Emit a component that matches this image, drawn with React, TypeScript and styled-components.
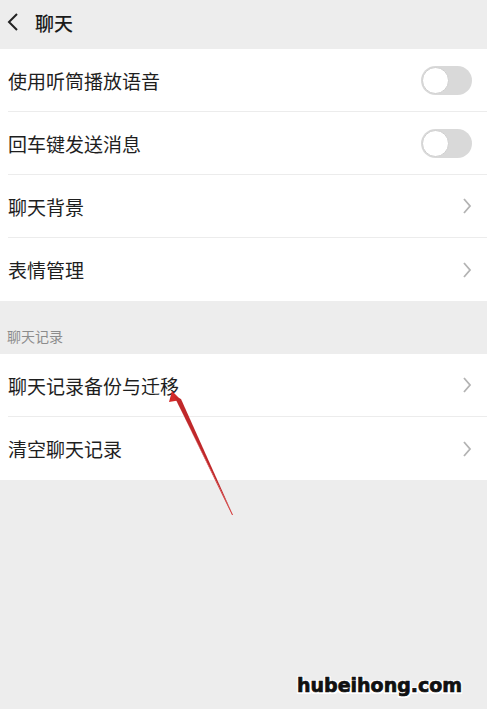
import React from "react";
import styled, { createGlobalStyle } from "styled-components";

const GlobalStyle = createGlobalStyle`
  html, body {
    margin: 0;
    padding: 0;
    background: #ededed;
  }
  body {
    font-family: "Noto Sans CJK SC", "Noto Sans", sans-serif;
  }
`;

const Page = styled.div`
  position: relative;
  width: 487px;
  height: 709px;
  background: #ededed;
  overflow: hidden;
`;

const Header = styled.div`
  height: 49px;
  display: flex;
  align-items: center;
  padding: 0 0 5px 6px;
  box-sizing: border-box;
  gap: 15px;
  color: #1a1a1a;
  font-size: 19px;
  font-weight: 500;
`;

const Group = styled.div`
  background: #fff;
  padding-left: 8px;
`;

const Row = styled.div<{ $last?: boolean }>`
  height: 63px;
  display: flex;
  align-items: center;
  justify-content: space-between;
  padding-right: 15px;
  box-sizing: border-box;
  border-bottom: ${(p) => (p.$last ? "none" : "1px solid #ececec")};
  font-size: 19px;
  color: #1e1e1e;
`;

const SectionLabel = styled.div`
  height: 53px;
  display: flex;
  align-items: flex-end;
  padding: 0 0 8px 7px;
  box-sizing: border-box;
  font-size: 14px;
  color: #8c8c8c;
`;

const Toggle = styled.div`
  width: 51px;
  height: 29px;
  border-radius: 15px;
  background: #d9d9d9;
  position: relative;
  &::after {
    content: "";
    position: absolute;
    left: 1px;
    top: 1px;
    width: 27px;
    height: 27px;
    box-sizing: border-box;
    border-radius: 50%;
    background: #fff;
    border: 1px solid #cfcfcf;
  }
`;

const Watermark = styled.div`
  position: absolute;
  left: 297px;
  top: 674px;
  font-family: "DejaVu Sans", sans-serif;
  font-weight: 900;
  font-size: 19px;
  letter-spacing: 0;
  color: #111;
  -webkit-text-stroke: 0.7px #111;
  text-shadow: 0 0 2px #fff, 1.5px 1.5px 0 #fff, -1.5px -1.5px 0 #fff, 1.5px -1.5px 0 #fff, -1.5px 1.5px 0 #fff;
`;

const Arrow = styled.svg`
  position: absolute;
  left: 0;
  top: 0;
  pointer-events: none;
`;

const Chevron = () => (
  <svg width="10" height="18" viewBox="0 0 10 18">
    <path d="M2 2 L8 9 L2 16" fill="none" stroke="#b3b3b3" strokeWidth="1.8" />
  </svg>
);

const Back = () => (
  <svg width="14" height="20" viewBox="0 0 14 20">
    <path d="M11 2 L3 10 L11 18" fill="none" stroke="#222" strokeWidth="2" />
  </svg>
);

export default function App() {
  return (
    <Page>
      <GlobalStyle />
      <Header>
        <Back />
        <span>聊天</span>
      </Header>
      <Group>
        <Row>
          使用听筒播放语音
          <Toggle />
        </Row>
        <Row>
          回车键发送消息
          <Toggle />
        </Row>
        <Row>
          聊天背景
          <Chevron />
        </Row>
        <Row $last>
          表情管理
          <Chevron />
        </Row>
      </Group>
      <SectionLabel>聊天记录</SectionLabel>
      <Group>
        <Row>
          聊天记录备份与迁移
          <Chevron />
        </Row>
        <Row $last>
          清空聊天记录
          <Chevron />
        </Row>
      </Group>
      <Arrow width="487" height="709" viewBox="0 0 487 709">
        <polygon points="172,392 178,404 232,515 233,515" fill="#d42a2a" />
        <polygon points="172,391 169,402 181,400" fill="#d42a2a" />
        <polygon points="174,396 181,399 233,515" fill="#c0282a" />
      </Arrow>
      <Watermark>hubeihong.com</Watermark>
    </Page>
  );
}
